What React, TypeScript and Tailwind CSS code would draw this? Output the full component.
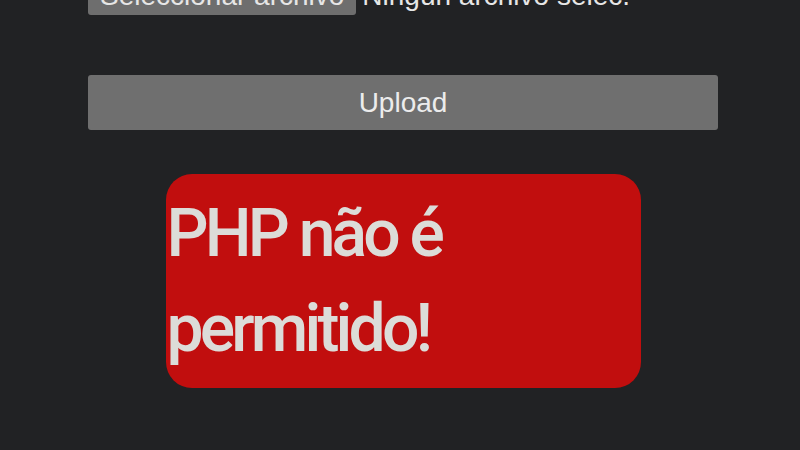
import React from 'react';

export default function App() {
  return (
    <div className="min-h-screen bg-[#212224] overflow-hidden" style={{ fontFamily: '"Liberation Sans", Arial, sans-serif' }}>
      <div className="ml-[88px] w-[630px] -mt-[24px]">
        {/* file picker, partly scrolled off the top */}
        <div className="flex items-center gap-[6px] text-[28px] leading-[39px]">
          <span className="bg-[#6e6e6e] text-[#e6e6e6] rounded-[3px] px-[12px] whitespace-nowrap">Seleccionar archivo</span>
          <span className="text-[#e6e6e6] whitespace-nowrap">Ningún archivo selec.</span>
        </div>

        <button className="mt-[60px] w-full h-[55px] bg-[#6f6f6f] rounded-[3px] text-[#ececec] text-[28px]">
          Upload
        </button>

        <div className="mt-[44px] mx-auto w-[475px] h-[214px] bg-[#c10e0e] rounded-[26px] pt-[12px] pl-[1px]">
          <p className="text-[#dcdcd8] text-[66px] leading-[95px] font-medium tracking-[-0.058em]" style={{ fontFamily: 'Roboto, sans-serif' }}>
            PHP não é permitido!
          </p>
        </div>
      </div>
    </div>
  );
}
